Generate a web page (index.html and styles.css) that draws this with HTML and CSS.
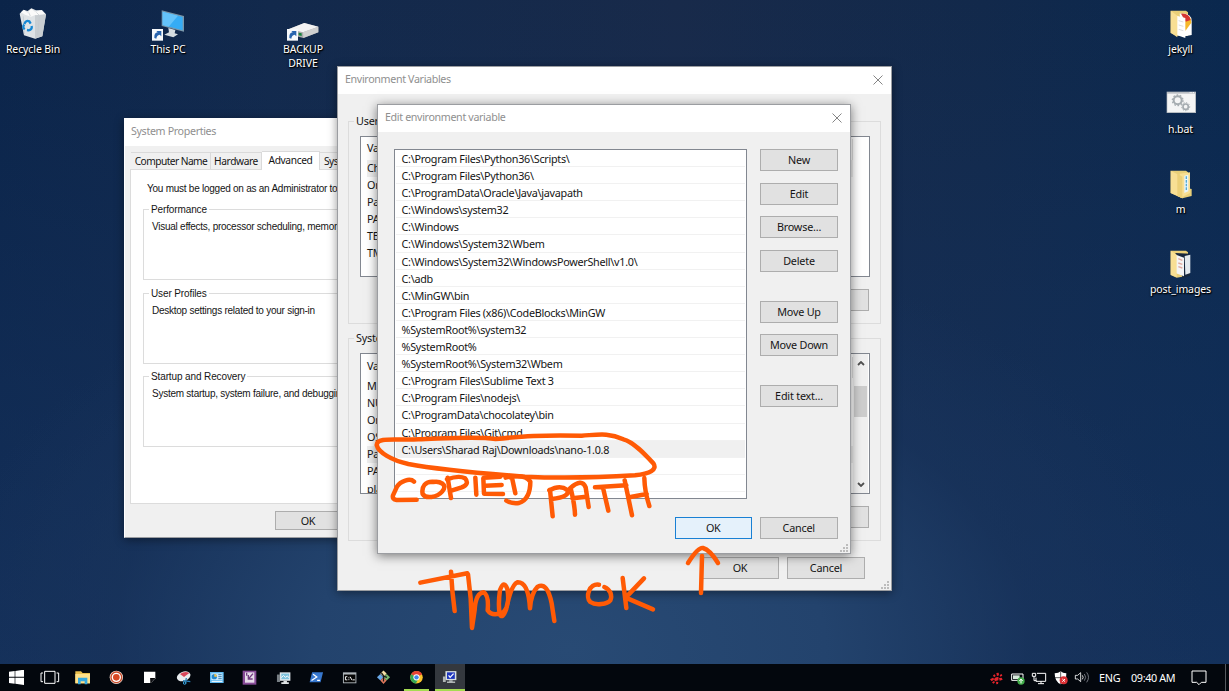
FILE: index.html
```html
<!DOCTYPE html>
<html lang="en">
<head>
<meta charset="utf-8">
<title>Desktop</title>
<link rel="stylesheet" href="styles.css">
</head>
<body>
<main class="desktop">
  <div class="shortcut at-bin">
    <svg width="34" height="36" viewBox="50 12 102 108"><path d="M61 38 72 26 85 30 96 22 110 28 128 27 140 40 129 106 107 113 74 103Z" fill="#dfe3e6"/><path d="M65 34 75 27 84 35 96 23 107 32 126 28 137 38 123 45 108 42 95 47 77 41Z" fill="#fafafa"/><path d="M107 43 140 40 129 106 107 113Z" fill="#c9ced2"/><path d="m72 46 3 53m45-53-5 58M88 34l5 11m18-11 8 8" stroke="#c3c9cd" stroke-width="2" fill="none"/><path d="M75 69q5-13 15-8l4 7m3 7q2 11-9 13l-5-1m-7-2q-8-7-1-14" fill="none" stroke="#1688d4" stroke-width="7"/></svg>
    <span>Recycle Bin</span>
  </div>
  <div class="shortcut at-pc">
    <svg width="34" height="36" viewBox="453 12 102 108"><path d="m485 28 67 17v47l-67-17Z" fill="#7a96a8"/><path d="m488 32 60 16v40l-60-16Z" fill="#35acf5"/><path d="m488 32 46 12-28 33-18-5Z" fill="#64c3fa"/><path d="m505 81 21 6-2 10 10 3-14 9-27-8 14-7Z" fill="#d5dce1"/><path d="M456 84h33v35h-33z" fill="#f7f9fb"/><path d="m463 111q-1-16 10-17l-4-4h15v16l-5-5q-9 1-10 12Z" fill="#2864ae"/></svg>
    <span>This PC</span>
  </div>
  <div class="shortcut at-drive">
    <svg width="34" height="36" viewBox="858 12 102 108"><path d="m867 84 46-18 42 11v17l-45 17-43-11Z" fill="#aaa"/><path d="m867 84 46-18 42 11-46 17Z" fill="#f3f3f3"/><path d="m909 94 46-17v17l-45 17Z" fill="#cfcfcf"/><path d="m896 95 9 2v8l-9-2Z" fill="#16813a"/><path d="M861 84h33v35h-33z" fill="#f7f9fb"/><path d="m868 111q-1-16 10-17l-4-4h15v16l-5-5q-9 1-10 12Z" fill="#2864ae"/></svg>
    <span>BACKUP<br>DRIVE</span>
  </div>
  <div class="shortcut at-jekyll">
    <svg width="30" height="36" viewBox="106 14 90 108"><path d="M120 31h46l6 5v70h-34l-18-8Z" fill="#e9cf78"/><path d="M147 40q36-4 36 22v42l-28 5Z" fill="#fff"/><path d="M157 43q26 0 25 24l-18 25Z" fill="#f6b82a"/><path d="M151 40q24-2 29 19l-15 5Z" fill="#d63634"/><path d="m138 46 26 7v60l-26-9Z" fill="#fff"/><path d="m144 61 14 4m-14 9 14 4m-14 9 14 4" stroke="#ccc" stroke-width="2"/><path d="m120 31 20 15v65l-20-14Z" fill="#f8df94"/></svg>
    <span>jekyll</span>
  </div>
  <div class="shortcut at-bat">
    <svg width="30" height="36" viewBox="107 255 90 108"><path d="M109 275h88v64h-88z" fill="#b9bec3"/><path d="M111 281h83v55h-83z" fill="#f4f5f5"/><path d="M178 278h15" stroke="#fff" stroke-width="3" stroke-dasharray="3 2"/><circle cx="142" cy="301" r="12" fill="none" stroke="#a5acb0" stroke-width="6"/><circle cx="142" cy="301" r="16" fill="none" stroke="#a5acb0" stroke-width="4" stroke-dasharray="5 5"/><circle cx="166" cy="320" r="8" fill="none" stroke="#a5acb0" stroke-width="5"/><circle cx="166" cy="320" r="12" fill="none" stroke="#a5acb0" stroke-width="3" stroke-dasharray="4 4"/></svg>
    <span>h.bat</span>
  </div>
  <div class="shortcut at-m">
    <svg width="30" height="36" viewBox="106 494 90 108"><path d="M120 511h46l6 5v48l11 2v21l-28 7-35-16Z" fill="#e9cf78"/><path d="m147 520 31-4v62l-23 12Z" fill="#f8df94"/><path d="m161 526 12-3v50l-12 5Z" fill="#e7f4fb"/><path d="M167 528v43" stroke="#53aad4" stroke-width="4" stroke-dasharray="8 3"/><path d="m120 511 35 18v65l-35-16Z" fill="#f8df94"/><path d="m140 520 15 9v65l-15-7Z" fill="#ecd078"/></svg>
    <span>m</span>
  </div>
  <div class="shortcut at-post">
    <svg width="30" height="36" viewBox="106 734 90 108"><path d="M120 751h46l6 5v70l-34 6-18-8Z" fill="#ecd078"/><path d="m134 758 44 2v66l-22 8Z" fill="#17273d"/><path d="m162 767 17-4v55l-15 5Z" fill="#e3e9ee"/><path d="m136 763 24 9v56l-24-9Z" fill="#f5f5f5"/><path d="m143 775 12 5m-12 8 12 4m-12 7 12 4" stroke="#dfaaa0" stroke-width="4"/><path d="m120 751 18 12v68l-18-8Z" fill="#f8df94"/></svg>
    <span>post_images</span>
  </div>

  <section class="window sysprops">
    <header class="titlebar"><span>System Properties</span></header>
    <nav class="tabs"><span class="tab t1">Computer Name</span><span class="tab t2">Hardware</span><span class="tab t3">Advanced</span><span class="tab t4">Sys</span></nav>
    <div class="panel">
      <p class="lead">You must be logged on as an Administrator to</p>
      <div class="frame"><h3><span>Performance</span></h3><p>Visual effects, processor scheduling, memory</p></div>
      <div class="frame"><h3><span>User Profiles</span></h3><p>Desktop settings related to your sign-in</p></div>
      <div class="frame"><h3><span>Startup and Recovery</span></h3><p>System startup, system failure, and debugging</p></div>
    </div>
    <div class="sp-foot"><span class="btn">OK</span></div>
  </section>

  <section class="window envvars">
    <header class="titlebar"><span>Environment Variables</span><svg class="close" viewBox="0 0 10 10"><path d="m.5.5 9 9m0-9-9 9"/></svg></header>
    <div class="env-group g-user"><h3>User</h3>
      <div class="table"><div class="th">Va</div><div class="tr sel">Ch</div><div class="tr">On</div><div class="tr">Pa</div><div class="tr">PA</div><div class="tr">TE</div><div class="tr">TM</div></div>
      <div class="row-end"><span class="btn"></span></div>
    </div>
    <div class="env-group g-sys"><h3>Syste</h3>
      <div class="table split"><div class="rows"><div class="th">Va</div><div class="tr">M</div><div class="tr">NU</div><div class="tr">On</div><div class="tr">OS</div><div class="tr sel">Pa</div><div class="tr">PA</div><div class="tr">pla</div></div>
        <div class="scroll"><svg viewBox="0 0 8 5"><path d="m1 4 3-3 3 3"/></svg><i></i><svg viewBox="0 0 8 5"><path d="m1 1 3 3 3-3"/></svg></div></div>
      <div class="row-end"><span class="btn"></span></div>
    </div>
    <div class="ev-foot"><span class="btn">OK</span><span class="btn">Cancel</span></div>
    <svg class="grip" viewBox="0 0 8 8"><path d="M6 0h2v2H6zM3 3h2v2H3zM6 3h2v2H6zM0 6h2v2H0zM3 6h2v2H3zM6 6h2v2H6z"/></svg>
  </section>

  <section class="window edit">
    <header class="titlebar"><span>Edit environment variable</span><svg class="close" viewBox="0 0 10 10"><path d="m.5.5 9 9m0-9-9 9"/></svg></header>
    <div class="edit-body">
      <ul class="paths">
        <li>C:\Program Files\Python36\Scripts\</li><li>C:\Program Files\Python36\</li><li>C:\ProgramData\Oracle\Java\javapath</li><li>C:\Windows\system32</li><li>C:\Windows</li><li>C:\Windows\System32\Wbem</li><li>C:\Windows\System32\WindowsPowerShell\v1.0\</li><li>C:\adb</li><li>C:\MinGW\bin</li><li>C:\Program Files (x86)\CodeBlocks\MinGW</li><li>%SystemRoot%\system32</li><li>%SystemRoot%</li><li>%SystemRoot%\System32\Wbem</li><li>C:\Program Files\Sublime Text 3</li><li>C:\Program Files\nodejs\</li><li>C:\ProgramData\chocolatey\bin</li><li>C:\Program Files\Git\cmd</li><li class="sel">C:\Users\Sharad Raj\Downloads\nano-1.0.8</li><li></li><li></li>
      </ul>
      <div class="actions"><span class="btn">New</span><span class="btn">Edit</span><span class="btn">Browse...</span><span class="btn">Delete</span><span class="btn gap">Move Up</span><span class="btn">Move Down</span><span class="btn gap">Edit text...</span></div>
    </div>
    <div class="edit-foot"><span class="btn primary">OK</span><span class="btn">Cancel</span></div>
    <svg class="grip" viewBox="0 0 8 8"><path d="M6 0h2v2H6zM3 3h2v2H3zM6 3h2v2H6zM0 6h2v2H0zM3 6h2v2H3zM6 6h2v2H6z"/></svg>
  </section>

  <svg class="ink" viewBox="0 0 1229 691" role="img" aria-label="Copied path, then OK">
    <g transform="translate(375 425) scale(.33333)">
      <path d="M362 42C300 32 190 42 130 43 60 46 5 35 5 60 10 82 50 106 100 117 200 136 330 146 450 155 570 161 680 157 780 151 825 146 848 134 835 115 810 88 775 50 745 43 700 22 670 29 620 32 500 29 440 34 362 42"/>
      <path d="M117 170C105 158 76 168 66 185L54 211Q51 223 65 225L125 224M180 171C149 167 139 186 143 207 152 222 186 218 202 199 220 179 194 167 174 171M218 158Q223 190 228 219M216 163Q252 150 270 160 285 177 260 187L229 197M301 158 304 209M325 160 327 206 384 207M327 158 376 155M331 182 380 180M411 158 421 205M392 158Q450 145 466 170 466 222 432 234 411 237 394 227"/>
      <path d="M525 194 533 274M523 196Q555 178 577 195 587 215 530 222M587 190Q599 238 600 269M585 190Q621 158 632 187L641 246M592 220 634 215M660 187 754 181M684 188 700 257M749 166 771 271M808 159Q809 200 823 243M763 217 815 207"/>
      <path d="M136 473 277 445M228 440Q231 500 239 558M279 448 287 520 291 609 299 555Q302 505 326 502 342 511 338 556 351 576 385 562 406 541 397 492 387 463 375 495 369 536 374 567 382 585 394 551 408 480 427 472 460 470 465 550 468 505 488 485 517 470 530 535L538 588"/>
      <path d="M672 479C643 474 630 516 646 531 663 543 697 537 706 526 712 512 707 494 688 486M743 459 754 549M807 460 752 518 834 553"/>
    </g>
    <path d="M701 593 702 556M688 563Q698 547 703 548 710 550 718 563"/>
  </svg>
</main>

<footer class="taskbar">
  <nav class="apps">
    <span><svg viewBox="27 30 45 45"><path d="m27 35 17-2v17H27zm19-2 26-4v21H46zM27 53h17v18l-17-2zm19 0h26v22l-26-4z" fill="#fff"/></svg></span>
    <span><svg class="wide" viewBox="116 30 60 45"><path d="M130 34h31v36h-31zM125 39h-6v26h6m41-26h6v26h-6" fill="none" stroke="#fff" stroke-width="3"/></svg></span>
    <span><svg viewBox="228 30 45 45"><path d="M229 34h17l5 5h22v31h-44z" fill="#eabf4d"/><path d="M229 42h44v28h-44z" fill="#ffe18a"/><path d="M237 53h28v20h-8v-9h-12v9h-8z" fill="#36a9df"/></svg></span>
    <span><svg viewBox="328 29 45 45"><circle cx="350" cy="51" r="20" fill="#f3ddd4"/><circle cx="350" cy="51" r="16" fill="#fff" stroke="#c94b29" stroke-width="4"/><circle cx="350" cy="51" r="10" fill="#d74823"/></svg></span>
    <span><svg viewBox="428 30 45 45"><path d="M434 35h34v20L455 69h-21z" fill="#fff"/><path d="M453 54h15l-13 15z" fill="#15161c"/><path d="M453 54h13v3h-10v12h-3z" fill="#050608"/></svg></span>
    <span><svg viewBox="529 30 45 45"><ellipse cx="552" cy="49" rx="21" ry="14" transform="rotate(-20 552 49)" fill="#e8ecef"/><path d="M541 42q15-11 28-3l-16 12z" fill="#d7465a"/><path d="m557 71 3-17m12 11-22-3" stroke="#2f82b9" stroke-width="4"/><circle cx="555" cy="69" r="4" fill="none" stroke="#37a1d8" stroke-width="3"/></svg></span>
    <span><svg viewBox="627 30 45 45"><path d="M630 36h41v33h-41z" fill="#5fbaf1"/><path d="M634 40h33v20h-33z" fill="#caeaff"/><circle cx="643" cy="50" r="8" fill="#2388cb"/><path d="M643 50v-8a8 8 0 0 1 8 8z" fill="#f9c64a"/><path d="M655 44h10m-10 6h10m-10 6h10" stroke="#3b7fae" stroke-width="3"/><path d="M635 64h32" stroke="#fff" stroke-width="3"/></svg></span>
    <span><svg viewBox="23 30 45 45"><path d="M25 32h41v42H25z" fill="#884c98"/><path d="M32 37h28v31H32z" fill="#e6dce9"/><path d="M37 38v9M56 41 42 57m0-12v12h13" fill="none" stroke="#713b80" stroke-width="4"/></svg></span>
    <span><svg viewBox="121 30 48 45"><path d="M133 36h34v27h-34z" fill="#e3eaee"/><path d="M138 40h25v18h-25z" fill="#7fc3de"/><path d="m138 53 7-7 6 6 6-4 6 5" fill="none" stroke="#fff" stroke-width="3"/><path d="M124 43h10v24h-10z" fill="#777e83"/><path d="M145 63h11v5h6v5h-24v-5h7z" fill="#dfe3e5"/></svg></span>
    <span><svg viewBox="221 30 48 45"><path d="M231 36h35l-8 32h-35z" fill="#3777ce"/><path d="m234 42 12 9-17 11m18 0h9" fill="none" stroke="#fff" stroke-width="4"/></svg></span>
    <span><svg viewBox="321 30 48 45"><path d="M324 36h43v35h-43z" fill="#aeb5ba"/><path d="M327 43h37v25h-37z" fill="#050505"/><path d="M338 50h-6v10h6m5-8v3m0 3v3m4-11 6 11m2-1h7" fill="none" stroke="#fff" stroke-width="3"/></svg></span>
    <span><svg viewBox="421 30 48 45"><path d="m445 30 10 10-10 11-10-11z" fill="#f4dfa4"/><path d="m435 41 10 11-10 10-11-10z" fill="#6aa8e6"/><path d="m455 41 11 11-11 10-10-10z" fill="#78b86c"/><path d="m445 52 10 10-10 11-10-11z" fill="#e27a5d"/><path d="m438 37 7 10v18m0-17 11 4" fill="none" stroke="#181818" stroke-width="4"/></svg></span>
    <span class="open"><svg viewBox="521 30 48 45"><circle cx="545" cy="52" r="20" fill="#fbc52c"/><path d="M545 52 528 42a20 20 0 0 1 35 0z" fill="#e84335"/><path d="M545 52 528 42a20 20 0 0 0 15 30l9-17z" fill="#35a853"/><circle cx="545" cy="52" r="10" fill="#fff"/><circle cx="545" cy="52" r="7" fill="#4285e8"/></svg></span>
    <span class="open active"><svg viewBox="621 30 48 45"><path d="M632 32h35v29h-35z" fill="#d9dfdf"/><path d="M637 36h25v21h-25z" fill="#1d35bd"/><path d="m642 46 5 6 11-12" fill="none" stroke="#fff" stroke-width="4"/><path d="M624 49h9v18h-9zm20 12h11v4h8v5h-26v-5h7z" fill="#afb5b5"/></svg></span>
  </nav>
  <div class="tray">
    <svg class="tray-icons" width="102" height="18" viewBox="45 27 306 54">
      <path d="M57 46l5-3 3 5-5 4zm10-7 7-1 1 8-6 2zm10 6 6-3 2 5-6 3zM48 58l9-5 4 5-8 6zm12-1q6-8 14-5l-1 9-10 3zm15-3 8-1 3 6-9 3zM54 67l6-4 3 4-5 4zm12-2 7 1-1 6-5 1z" fill="#e3242b"/>
      <path d="M113 42h34v19h-34z" fill="none" stroke="#fff" stroke-width="3"/><path d="M117 46h20v11h-20z" fill="#d9eade"/><circle cx="141" cy="63" r="11" fill="#43ae4b"/><path d="M141 70V58m-5 5 5-6 5 6" fill="none" stroke="#fff" stroke-width="3"/>
      <path d="M189 40h26v24h-29V53m15 11v7m-9 0h18M175 40h10v9h-10zM180 49v13h7" fill="none" stroke="#fff" stroke-width="3"/>
      <path d="M242 40q12 0 18-6 6 6 17 6 1 25-17 33-18-8-18-33z" fill="#fff"/><path d="M260 34v38m-18-19h35" stroke="#151515" stroke-width="2"/><circle cx="269" cy="61" r="12" fill="#da3035"/><path d="m265 57 8 8m0-8-8 8" stroke="#fff" stroke-width="3"/>
      <path d="M304 46h7l9-8v27l-9-8h-7zm21 0q5 6 0 12" fill="none" stroke="#fff" stroke-width="2.5"/><path d="M331 42q8 10 0 20m7-25q11 15 0 30" fill="none" stroke="#858991" stroke-width="2.5"/>
    </svg>
    <span class="lang">ENG</span><span class="clock">09:40 AM</span>
    <svg class="notice" width="16" height="16" viewBox="649 29 48 48"><path d="M652 32h42v34h-14l-7 7-7-7h-14z" fill="none" stroke="#fff" stroke-width="3"/></svg>
    <i class="peek"></i>
  </div>
</footer>
</body>
</html>
```
FILE: styles.css
```css
* { box-sizing: border-box; }
body { margin: 0; width: 1229px; height: 691px; overflow: hidden; display: flex; flex-direction: column; font: 10.8px/17px "Noto Sans", "Open Sans", sans-serif; letter-spacing: -.2px; color: #151515; background: #153058; }
h3, p, ul { margin: 0; padding: 0; font-weight: normal; font-size: inherit; }
ul { list-style: none; }
span, p, h3 { white-space: nowrap; }

.desktop { position: relative; flex: 1; overflow: hidden; background: radial-gradient(ellipse 640px 420px at 570px 650px, #284a74 0, #23436d 40%, rgba(25,52,92,.6) 72%, transparent 100%), linear-gradient(180deg, transparent 0, rgba(23,52,96,.75) 100%), linear-gradient(90deg, #0b2449 0, #12294c 22%, #182a4a 55%, #12294b 80%, #0a284e 100%); }
.shortcut { position: absolute; width: 90px; display: flex; flex-direction: column; align-items: center; color: #fff; font-size: 10.5px; line-height: 13.5px; letter-spacing: -.1px; text-align: center; text-shadow: 0 1px 2px #000, 1px 1px 1px #000; }
.shortcut svg { margin-bottom: 2px; }
.at-bin { left: -12px; top: 5px; }
.at-pc { left: 123px; top: 5px; }
.at-drive { left: 258px; top: 5px; }
.at-jekyll { left: 1135.5px; top: 5px; }
.at-bat { left: 1135.5px; top: 85px; }
.at-m { left: 1135.5px; top: 165px; }
.at-post { left: 1135.5px; top: 245px; }

.window { position: absolute; display: flex; flex-direction: column; background: #f0f0f0; border: 1px solid #9b9da1; box-shadow: 0 2px 9px rgba(0,0,0,.42); }
.titlebar { flex: none; height: 27px; display: flex; align-items: center; justify-content: space-between; padding: 0 8px 2px 7px; background: #fff; color: #8f8f8f; font-size: 10.7px; letter-spacing: -.35px; }
.close { width: 10px; height: 10px; fill: none; stroke: #858585; stroke-width: 1; }
.btn { flex: none; width: 78px; height: 22px; display: flex; align-items: center; justify-content: center; padding-bottom: 1px; background: #e1e1e1; border: 1px solid #adadad; }
.primary { background: #e5f1fb; border-color: #1980d4; }
.grip { position: absolute; right: 2px; bottom: 1px; width: 8px; height: 8px; fill: #bcbcbc; }

.sysprops { left: 124px; top: 118px; width: 280px; height: 420px; border-left-color: #fff; border-top-color: #fff; }
.sysprops .titlebar { padding-left: 6px; padding-bottom: 3px; }
.tabs { display: flex; align-items: flex-end; height: 23px; padding-left: 6px; font-size: 10.2px; letter-spacing: -.55px; }
.tab { flex: none; height: 17px; display: flex; align-items: center; justify-content: center; border: 1px solid #dadada; border-width: 1px 1px 0 0; }
.t1 { width: 80px; padding-left: 1px; }
.t2 { width: 51px; letter-spacing: -.4px; }
.t3 { width: 58px; height: 19px; background: #fff; margin-bottom: -1px; padding-bottom: 2px; letter-spacing: -.35px; z-index: 1; }
.t4 { width: 60px; justify-content: flex-start; padding-left: 4px; }
.panel { margin: 0 0 0 5px; height: 335px; padding: 10px 0 0 12px; background: #fff; border: 1px solid #dcdcdc; font: 10px/16px "Liberation Sans", Arial, sans-serif; letter-spacing: -.25px; }
.lead { height: 29px; padding: 1px 0 0 4px; }
.frame { height: 71px; margin-bottom: 12.5px; border: 1px solid #dcdcdc; }
.frame h3 { display: flex; margin: -8px 0 0 5px; height: 16px; letter-spacing: -.12px; }
.frame h3 span { background: #fff; padding: 0 2px; }
.frame p { padding: 1px 0 0 8px; }
.sp-foot { padding: 7px 0 0 150px; }
.sp-foot .btn { height: 19px; width: 66px; }

.envvars { left: 337px; top: 66px; width: 555px; height: 525px; }
.env-group { height: 203px; margin: 0 10px 0 10px; padding: 0 10px 0 11px; border: 1px solid #dcdcdc; }
.g-user { margin-top: 27px; }
.g-sys { margin-top: 14px; }
.env-group h3 { width: 32px; height: 16px; line-height: 15px; margin: -9px 0 7px -6px; padding-left: 2px; background: #f0f0f0; }
.table { height: 141px; padding: 2px 0 0 6px; background: #fff; border: 1px solid #828790; overflow: hidden; }
.th { height: 21px; line-height: 18px; border-right: 1px solid #e0e0e0; width: 486px; }
.tr { height: 17.1px; line-height: 16px; }
.tr.sel { background: #efefef; width: 486px; }
.split { display: flex; justify-content: space-between; padding-right: 1px; padding-top: 3px; }
.rows { flex: 1; }
.scroll { width: 15px; margin-top: -3px; display: flex; flex-direction: column; align-items: center; padding: 7px 0 6px; background: #f0f0f0; }
.scroll svg { flex: none; width: 8px; height: 5px; fill: none; stroke: #505050; stroke-width: 1.8; }
.scroll i { width: 13px; height: 31px; margin: 20px 0 auto; background: #cdcdcd; }
.row-end { display: flex; justify-content: flex-end; padding: 12px 1px 0 0; }
.ev-foot { display: flex; justify-content: flex-end; gap: 8px; padding: 15.5px 26px 0 0; }

.edit { left: 377px; top: 104px; width: 474px; height: 450px; box-shadow: 0 2px 10px rgba(0,0,0,.5); }
.edit-body { display: flex; gap: 13px; padding: 17px 0 0 16px; }
.paths { width: 353px; height: 350px; padding: 0 1px 0 1px; background: #fff; border: 1px solid #828790; overflow: hidden; letter-spacing: -.28px; }
.paths li { height: 17.1px; line-height: 18px; padding-left: 5.5px; border-bottom: 1px solid #f1f1f1; white-space: nowrap; }
.paths .sel { background: #f0f0f0; line-height: 17px; }
.actions { display: flex; flex-direction: column; gap: 11.6px; }
.actions .gap { margin-top: 17.4px; }
.edit-foot { display: flex; gap: 8px; padding: 18px 0 0 296.5px; }
.edit-foot .btn { width: 77.5px; }
.ink { position: absolute; inset: 0; width: 1229px; height: 691px; fill: none; stroke: #ff5a05; stroke-width: 4.5; stroke-linecap: round; stroke-linejoin: round; }
.ink g { stroke-width: 13.5; }

.taskbar { position: relative; flex: none; height: 27px; display: flex; justify-content: space-between; background: #03070d; color: #fff; }
.apps { display: flex; margin-left: -.4px; }
.apps span { width: 33.35px; display: flex; align-items: center; justify-content: center; }
.apps svg { width: 15px; height: 15px; }
.apps .wide { width: 20px; }
.apps .open { background: linear-gradient(#a5dc51, #a5dc51) 50% 100% / 25px 2px no-repeat; }
.apps .active { background: linear-gradient(#a5dc51, #a5dc51) 50% 100% / 30px 2px no-repeat, linear-gradient(#34383e, #34383e) 50% 50% / 30px 100% no-repeat; }
.tray { display: flex; align-items: center; }
.tray-icons { margin-right: 8px; }
.lang { width: 32px; padding-bottom: 1px; }
.clock { width: 60px; padding-bottom: 1px; letter-spacing: -.35px; }
.notice { margin-right: 18px; }
.peek { width: 4px; height: 27px; border-left: 1px solid #55595e; }
```
